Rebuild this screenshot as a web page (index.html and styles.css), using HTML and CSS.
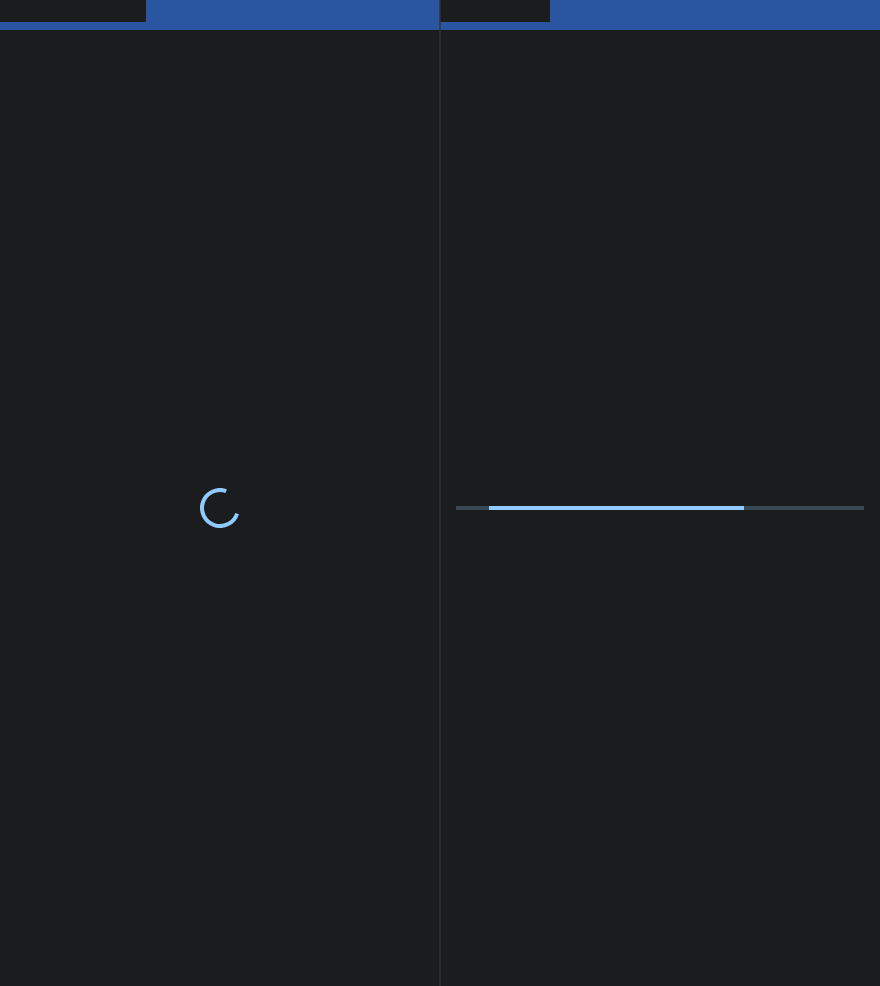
FILE: index.html
```
<!DOCTYPE html>
<html lang="en">
<head>
<meta charset="utf-8">
<meta name="viewport" content="width=device-width, initial-scale=1">
<title>Progress indicators</title>
<link rel="stylesheet" href="styles.css">
</head>
<body>
<main class="panes">
  <section class="pane">
    <header class="bar"><div class="tab tab-wide"></div></header>
    <div class="content">
      <svg class="spinner" viewBox="0 0 40 40" role="progressbar">
        <path d="M26.16 3.08A18 18 0 1 0 37.12 25.56"/>
      </svg>
    </div>
  </section>
  <section class="pane">
    <header class="bar"><div class="tab"></div></header>
    <div class="content">
      <div class="track" role="progressbar"><div class="fill"></div></div>
    </div>
  </section>
</main>
</body>
</html>
```
FILE: styles.css
```
* {
  box-sizing: border-box;
}

body {
  margin: 0;
  background: #1b1c1d;
}

.panes {
  position: relative;
  display: grid;
  grid-template-columns: 1fr 1fr;
  min-height: 100vh;
}

/* Divider lies over the seam between the panes */
.panes::after {
  content: "";
  position: absolute;
  top: 0;
  bottom: 0;
  left: 50%;
  width: 2px;
  margin-left: -1px;
  background: rgba(50, 49, 59, 0.7);
}

.pane {
  display: flex;
  flex-direction: column;
}

.bar {
  height: 30px;
  background: #2a55a0;
}

.tab {
  width: 25%;
  height: 22px;
  background: #1b1c1d;
}

.tab-wide {
  width: 33.2%;
}

.content {
  flex: 1;
  display: flex;
  align-items: center;
  justify-content: center;
  padding: 0 16px;
}

.spinner {
  width: 40px;
  height: 40px;
  fill: none;
  stroke: #90caff;
  stroke-width: 4;
}

.track {
  width: 100%;
  height: 4px;
  background: #394857;
}

.fill {
  width: 62.5%;
  height: 100%;
  margin-left: 8%;
  background: #90caff;
}
```
